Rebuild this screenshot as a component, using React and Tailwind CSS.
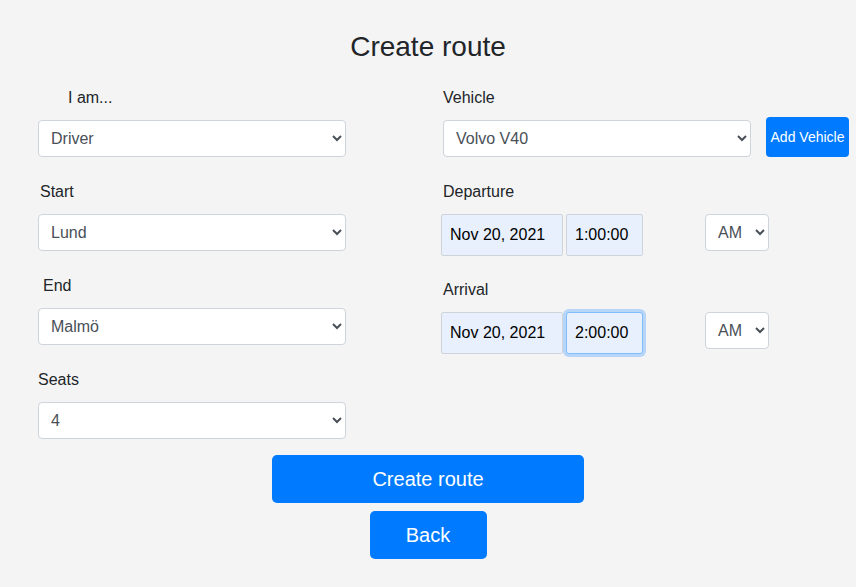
import React, { useState } from 'react';

const selectCls =
    "block w-full h-[37px] pl-[8px] pr-[8px] bg-white border border-[#ced4da] rounded-[4px] text-[16px] text-[#495057] focus:outline-none";

const Field = ({ label, labelCls = '', children, className = '' }) => (
    <div className={className}>
        <label className={`block h-[24px] leading-[24px] text-[16px] text-[#212529] mb-[10px] ${labelCls}`}>{label}</label>
        {children}
    </div>
);

const DateTimeRow = ({ date, time, focused }) => (
    <div className="flex items-start">
        <input
            readOnly
            value={date}
            className="w-[122px] h-[42px] pl-[8px] bg-[#e8f0fe] border border-[#ced4da] rounded-[2px] text-[16px] text-black focus:outline-none"
        />
        <input
            readOnly
            value={time}
            className={
                focused
                    ? "ml-[3px] w-[77px] h-[42px] pl-[8px] bg-[#e8f0fe] border border-[#80bdff] rounded-[3px] text-[16px] text-black shadow-[0_0_0_3px_rgba(0,123,255,0.25)] outline-none"
                    : "ml-[3px] w-[77px] h-[42px] pl-[8px] bg-[#e8f0fe] border border-[#ced4da] rounded-[2px] text-[16px] text-black focus:outline-none"
            }
        />
        <select className="ml-[62px] w-[64px] h-[37px] pl-[8px] bg-white border border-[#ced4da] rounded-[4px] text-[16px] text-[#495057] focus:outline-none">
            <option>AM</option>
            <option>PM</option>
        </select>
    </div>
);

const App = () => {
    const [role, setRole] = useState('Driver');

    return (
        <div className="min-h-screen bg-[#f4f4f4] font-['Liberation_Sans',Arial,sans-serif] text-[#212529]">
            <h1 className="pt-[30px] text-center text-[28px] leading-[34px]">Create route</h1>

            <div className="mt-[22px] flex">
                <div className="ml-[38px] w-[308px]">
                    <Field label="I am..." labelCls="pl-[30px]">
                        <select className={selectCls} value={role} onChange={(e) => setRole(e.target.value)}>
                            <option>Driver</option>
                            <option>Passenger</option>
                        </select>
                    </Field>
                    <Field label="Start" labelCls="pl-[2px]" className="mt-[23px]">
                        <select className={selectCls}>
                            <option>Lund</option>
                        </select>
                    </Field>
                    <Field label="End" labelCls="pl-[5px]" className="mt-[23px]">
                        <select className={selectCls}>
                            <option>Malmö</option>
                        </select>
                    </Field>
                    <Field label="Seats" className="mt-[23px]">
                        <select className={selectCls}>
                            <option>4</option>
                        </select>
                    </Field>
                </div>

                <div className="ml-[95px]">
                    <div className="pl-[2px]">
                        <label className="block h-[24px] leading-[24px] text-[16px] mb-[7px]">Vehicle</label>
                        <div className="flex items-start">
                            <select className={`${selectCls} mt-[3px] !w-[308px]`}>
                                <option>Volvo V40</option>
                            </select>
                            <button className="ml-[15px] w-[83px] h-[40px] bg-[#007bff] text-white text-[14px] rounded-[4px] whitespace-nowrap">
                                Add Vehicle
                            </button>
                        </div>
                    </div>

                    <div className="mt-[23px]">
                        <label className="block pl-[2px] h-[24px] leading-[24px] text-[16px] mb-[10px]">Departure</label>
                        <DateTimeRow date="Nov 20, 2021" time="1:00:00" />
                    </div>

                    <div className="mt-[22px]">
                        <label className="block pl-[2px] h-[24px] leading-[24px] text-[16px] mb-[10px]">Arrival</label>
                        <DateTimeRow date="Nov 20, 2021" time="2:00:00" focused />
                    </div>
                </div>
            </div>

            <div className="mt-[16px] flex flex-col items-center">
                <button className="w-[312px] h-[48px] bg-[#007bff] text-white text-[20px] rounded-[5px]">
                    Create route
                </button>
                <button className="mt-[8px] w-[117px] h-[48px] bg-[#007bff] text-white text-[20px] rounded-[5px]">
                    Back
                </button>
            </div>
        </div>
    );
};

export default App;
